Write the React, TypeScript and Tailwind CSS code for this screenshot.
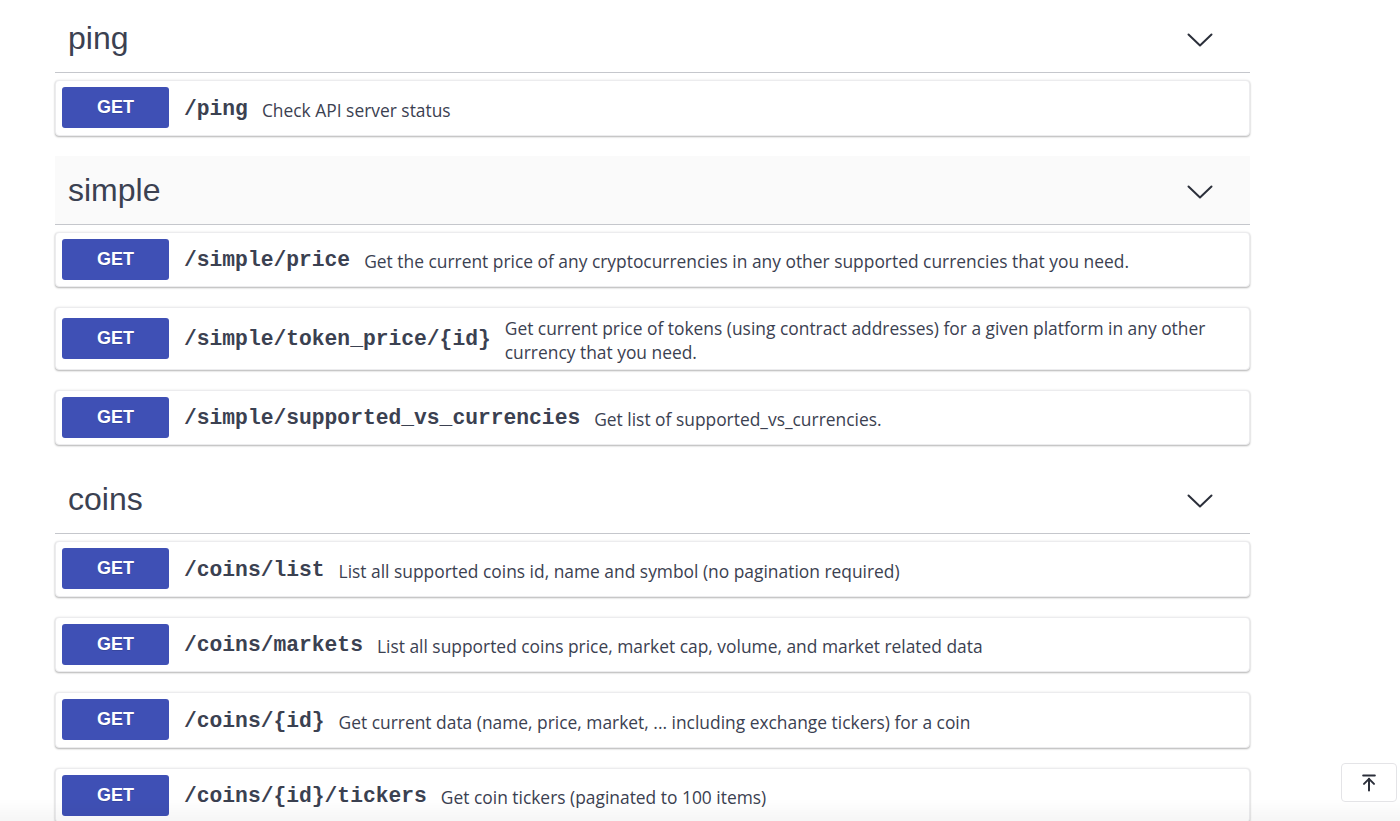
import { ArrowUpToLine } from "lucide-react";

type Endpoint = {
  path: string;
  summary: string;
};

type Tag = {
  name: string;
  hovered?: boolean;
  endpoints: Endpoint[];
};

const tags: Tag[] = [
  {
    name: "ping",
    endpoints: [{ path: "/ping", summary: "Check API server status" }],
  },
  {
    name: "simple",
    hovered: true,
    endpoints: [
      {
        path: "/simple/price",
        summary: "Get the current price of any cryptocurrencies in any other supported currencies that you need.",
      },
      {
        path: "/simple/token_price/{id}",
        summary:
          "Get current price of tokens (using contract addresses) for a given platform in any other currency that you need.",
      },
      {
        path: "/simple/supported_vs_currencies",
        summary: "Get list of supported_vs_currencies.",
      },
    ],
  },
  {
    name: "coins",
    endpoints: [
      {
        path: "/coins/list",
        summary: "List all supported coins id, name and symbol (no pagination required)",
      },
      {
        path: "/coins/markets",
        summary: "List all supported coins price, market cap, volume, and market related data",
      },
      {
        path: "/coins/{id}",
        summary: "Get current data (name, price, market, ... including exchange tickers) for a coin",
      },
      {
        path: "/coins/{id}/tickers",
        summary: "Get coin tickers (paginated to 100 items)",
      },
    ],
  },
];

function Chevron() {
  return (
    <svg width="26" height="16" viewBox="0 0 26 16" fill="none" className="mt-[4px]">
      <path d="M1.5 2.5 13 13.5 24.5 2.5" stroke="#2b2f3a" strokeWidth="2" strokeLinecap="round" strokeLinejoin="round" />
    </svg>
  );
}

function Operation({ item }: { item: Endpoint }) {
  return (
    <div className="mb-5 flex items-center rounded-[4px] border border-[#ececee] bg-white px-[6px] py-[6.25px] shadow-[0_1px_2px_rgba(0,0,0,0.28),0_0_3px_rgba(0,0,0,0.06)]">
      <div className="flex h-[41px] w-[107px] shrink-0 items-center justify-center rounded-[3px] bg-[#3f50b5] font-['Liberation_Sans',Arial,sans-serif] text-[18px] font-bold text-white [text-shadow:0_1px_0_rgba(0,0,0,0.15)]">
        GET
      </div>
      <span className="ml-[15px] shrink-0 translate-y-[2px] font-['Liberation_Mono','Courier_New',monospace] text-[21.3px] font-bold text-[#3b4151]">
        {item.path}
      </span>
      <span className="ml-[14px] translate-y-[2px] pr-[18px] font-['Open_Sans',sans-serif] text-[17.4px] leading-6 text-[#3b4151]">
        {item.summary}
      </span>
    </div>
  );
}

function TagSection({ tag }: { tag: Tag }) {
  return (
    <section>
      <div
        className={
          tag.hovered
            ? "flex h-[69px] items-center justify-between border-b border-[#c5c7cc] bg-[#fafafa] pl-[13px] pr-[37px]"
            : "flex h-[69px] items-center justify-between border-b border-[#c5c7cc] pl-[13px] pr-[37px]"
        }
      >
        <h3 className="font-['Liberation_Sans',Arial,sans-serif] text-[32px] text-[#3b4151]">{tag.name}</h3>
        <Chevron />
      </div>
      <div className="pt-[7px]">
        {tag.endpoints.map((item) => (
          <Operation item={item} key={item.path} />
        ))}
      </div>
    </section>
  );
}

export default function App() {
  return (
    <div className="relative h-[821px] overflow-hidden bg-white">
      <div className="ml-[55px] w-[1195px] pt-[4px]">
        {tags.map((tag) => (
          <TagSection tag={tag} key={tag.name} />
        ))}
      </div>
      <div className="pointer-events-none fixed inset-x-0 bottom-0 h-[22px] bg-gradient-to-b from-transparent to-[rgba(0,0,0,0.035)]" />
      <button
        className="fixed bottom-[19px] right-[3px] flex h-[39px] w-[56px] items-center justify-center rounded-[4px] border border-[#e4e4e7] bg-white text-[#2b2f3a]"
        type="button"
      >
        <ArrowUpToLine size={20} strokeWidth={2.4} />
      </button>
    </div>
  );
}
